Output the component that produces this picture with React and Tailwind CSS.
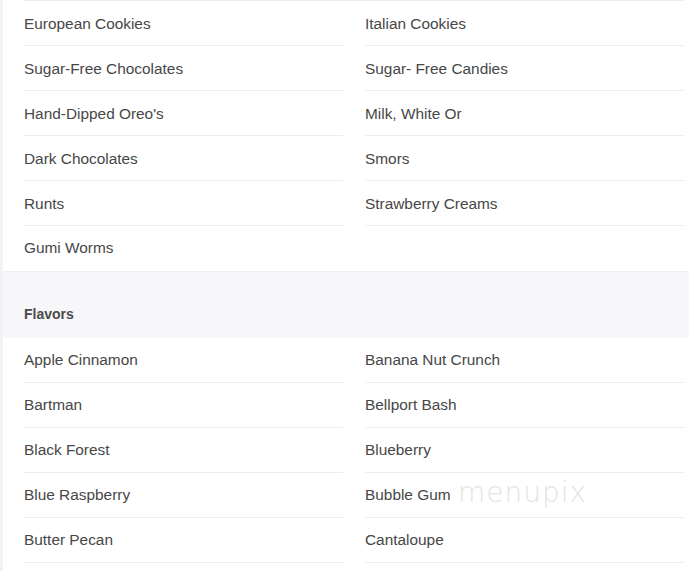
import React from "react";

const top = [
  ["European Cookies", "Italian Cookies"],
  ["Sugar-Free Chocolates", "Sugar- Free Candies"],
  ["Hand-Dipped Oreo's", "Milk, White Or"],
  ["Dark Chocolates", "Smors"],
  ["Runts", "Strawberry Creams"],
  ["Gumi Worms", null],
];

const flavors = [
  ["Apple Cinnamon", "Banana Nut Crunch"],
  ["Bartman", "Bellport Bash"],
  ["Black Forest", "Blueberry"],
  ["Blue Raspberry", "Bubble Gum"],
  ["Butter Pecan", "Cantaloupe"],
];

function Cell({ text, border, shift }) {
  if (!text) return <div />;
  return (
    <div
      className={
        "h-[45px] flex items-center text-[15.4px] text-[#474747] " +
        (shift ? (border ? "pt-[2px] " : "pb-[1px] ") : "") +
        (border ? "border-b border-[#ededed]" : "")
      }
    >
      {text}
    </div>
  );
}

export default function App() {
  return (
    <div
      className="w-[689px] h-[571px] overflow-hidden bg-white relative border-l-[3px] border-[#f3f3f3]"
      style={{ fontFamily: '"Liberation Sans", Arial, sans-serif' }}
    >
      <div className="pl-[21px] pr-[5px]">
        <div className="grid grid-cols-2 gap-x-[22px] border-t border-[#ededed]">
          {top.map((r, i) => (
            <React.Fragment key={i}>
              <Cell text={r[0]} border={i < top.length - 1} shift />
              <Cell text={r[1]} border={i < top.length - 1} shift />
            </React.Fragment>
          ))}
        </div>
      </div>
      <div className="h-[67px] bg-[#f7f7f9] border-t border-[#eeeeee] pl-[21px] flex items-end pb-[13px]">
        <span className="text-[14px] font-bold text-[#4a4a4a]">Flavors</span>
      </div>
      <div className="pl-[21px] pr-[5px]">
        <div className="grid grid-cols-2 gap-x-[22px]">
          {flavors.map((r, i) => (
            <React.Fragment key={i}>
              <Cell text={r[0]} border />
              <Cell text={r[1]} border />
            </React.Fragment>
          ))}
        </div>
      </div>
      <div
        className="absolute left-[455px] top-[472px] text-[28px] text-[#e4e4e4] tracking-[1px] pointer-events-none"
        style={{ fontFamily: '"DejaVu Sans", sans-serif', fontWeight: 200 }}
      >
        menupix
      </div>
    </div>
  );
}
